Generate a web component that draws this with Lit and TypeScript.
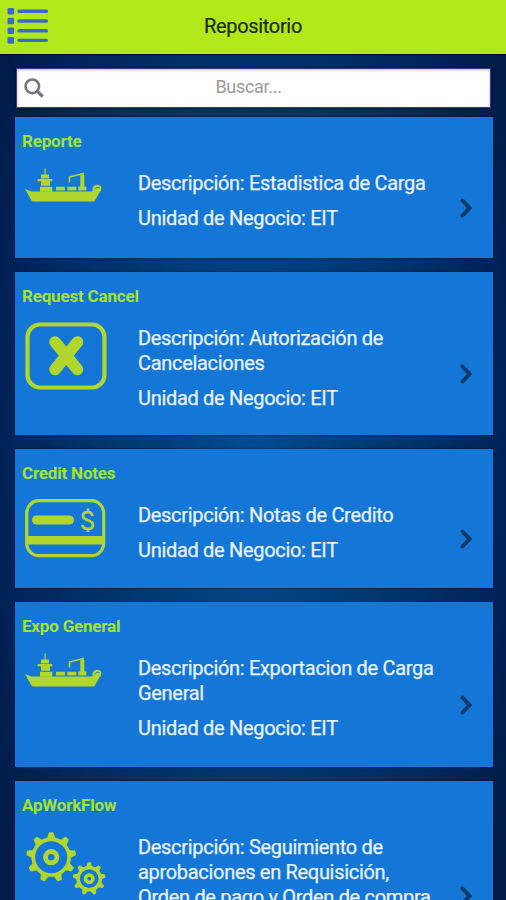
import { LitElement, html, css, svg } from "lit";
import { customElement, property } from "lit/decorators.js";

type IconName = "ship" | "cancel" | "card" | "gears";

interface Report {
  title: string;
  icon: IconName;
  description: string;
  unit: string;
  height: number;
}

const REPORTS: Report[] = [
  { title: "Reporte", icon: "ship", description: "Estadistica de Carga", unit: "EIT", height: 141 },
  { title: "Request Cancel", icon: "cancel", description: "Autorización de Cancelaciones", unit: "EIT", height: 163 },
  { title: "Credit Notes", icon: "card", description: "Notas de Credito", unit: "EIT", height: 139 },
  { title: "Expo General", icon: "ship", description: "Exportacion de Carga General", unit: "EIT", height: 165 },
  {
    title: "ApWorkFlow",
    icon: "gears",
    description: "Seguimiento de aprobaciones en Requisición, Orden de pago y Orden de compra",
    unit: "EIT",
    height: 189,
  },
];

// Toothed ring outline with narrow, slightly tapered teeth.
function gearPath(cx: number, cy: number, outer: number, root: number, teeth: number): string {
  const points: string[] = [];
  const step = (Math.PI * 2) / teeth;
  for (let i = 0; i < teeth; i++) {
    const a = -Math.PI / 2 + i * step;
    for (const [r, o] of [[root, -0.25], [outer, -0.1], [outer, 0.1], [root, 0.25]]) {
      points.push(`${(cx + r * Math.cos(a + o * step)).toFixed(2)} ${(cy + r * Math.sin(a + o * step)).toFixed(2)}`);
    }
  }
  return `M${points.join("L")}Z`;
}

const ICONS = {
  ship: svg`
    <path d="M0 22l6.500 2.500h59.500l4-1 6-1-6 11q-.5 1-2 1H8.500q-1.500 0-2-1z" />
    <path d="M19.500 1.500h1.200v6h3.300v4h-8v-4h3.500zM12.700 12h14.600v2.200h-2.300v4.500h-9v-4.500h-3.300zM15 19.700h12.300v5H15zM31 19.700h9v3.700h-9zM42.300 19.700h9v3.700h-9zM53.300 23.400v-4h2V8h4v11.400h2v4z" />
    <path d="M44.500 15.500V10l13.500-3.500v3" fill="none" stroke="currentColor" stroke-width="1.600" />
    <path d="M67.500 24v-3q1.500-3.200 5-3.200 3 0 3.800 2.700l-.6 4z" />
    <path d="M69.500 22q2.500-2.500 5-1.500" fill="none" stroke="#1477d8" stroke-width=".8" />`,
  cancel: svg`
    <rect x="2.500" y="2.500" width="77" height="63" rx="12.500" fill="none" stroke="currentColor" stroke-width="4.200" />
    <path d="M30 20l22.500 27.500M52.500 20l-22.500 27.500" fill="none" stroke="currentColor" stroke-width="11.500" stroke-linecap="round" />`,
  card: svg`
    <rect x="1.700" y="1.700" width="77" height="55" rx="12.500" fill="none" stroke="currentColor" stroke-width="3.200" />
    <rect x="7" y="16.500" width="42" height="9" rx="4.500" />
    <rect x="1" y="37" width="78" height="8.500" />
    <path d="M67.500 17c-.4-2.400-2-3.800-4.500-3.800-3.200 0-5 1.500-5 3.700 0 5.300 10 3.300 10 9 0 2.500-2 4-5.200 4-3 0-5-1.400-5.300-4M63 9.500v4M63 29v4" fill="none" stroke="currentColor" stroke-width="2.800" />`,
  gears: svg`
    <path fill-rule="evenodd" stroke="currentColor" stroke-width="1.500" stroke-linejoin="round"
      d="${gearPath(26.2, 26.2, 24.2, 19.2, 9)}M43 26.200a16.800 16.800 0 1 0-33.600 0a16.800 16.800 0 1 0 33.600 0z" />
    <circle cx="26.200" cy="26.200" r="5.700" fill="none" stroke="currentColor" stroke-width="4.800" />
    <path fill-rule="evenodd" stroke="currentColor" stroke-width="1.200" stroke-linejoin="round"
      d="${gearPath(64.2, 47.7, 15.8, 12.4, 9)}M74.200 47.700a10 10 0 1 0-20 0a10 10 0 1 0 20 0z" />
    <circle cx="64.200" cy="47.700" r="3.700" fill="none" stroke="currentColor" stroke-width="3.600" />`,
};

@customElement("report-card")
class ReportCard extends LitElement {
  @property({ attribute: false }) report!: Report;

  static styles = css`
    :host {
      display: flex;
      flex-direction: column;
      box-sizing: border-box;
      background: #1477d8;
      box-shadow: 0 0 2px #001040;
      color: #e9f3ff;
    }
    .title {
      height: 42px;
      box-sizing: border-box;
      padding: 13px 7px 0;
      font-size: 17px;
      line-height: 22px;
      font-weight: 700;
      letter-spacing: -0.19px;
      color: #a6e32c;
    }
    .body {
      flex: 1;
      display: grid;
      grid-template-columns: 113px 304px 1fr;
      padding-left: 10px;
    }
    .icon {
      display: block;
      width: 84px;
      height: 70px;
      margin-top: 8px;
      fill: currentColor;
      color: #b1d72f;
    }
    .text {
      padding-top: 12px;
      font-size: 20px;
      line-height: 25px;
      letter-spacing: -0.31px;
      -webkit-text-stroke: 0.25px;
    }
    .text p {
      margin: 0 0 9.500px;
    }
    .chevron {
      align-self: center;
      display: block;
      width: 14px;
      height: 22px;
      margin-left: 17px;
      margin-bottom: 1px;
      fill: none;
      stroke: #0c3a6b;
      stroke-width: 4;
      stroke-linecap: round;
    }
  `;

  render() {
    const r = this.report;
    return html`
      <div class="title">${r.title}</div>
      <div class="body">
        <svg class="icon" viewBox="0 0 84 70">${ICONS[r.icon]}</svg>
        <div class="text">
          <p>Descripción: ${r.description}</p>
          <p>Unidad de Negocio: ${r.unit}</p>
        </div>
        <svg class="chevron" viewBox="0 0 14 22"><path d="M3.500 3.500l7 7.500-7 7.500" /></svg>
      </div>
    `;
  }
}

@customElement("app-root")
class AppRoot extends LitElement {
  static styles = css`
    :host {
      display: flex;
      flex-direction: column;
      height: 900px;
      overflow: hidden;
      font-family: Roboto, "Liberation Sans", sans-serif;
      background: radial-gradient(ellipse 300px 680px at 50% 50%, #004c92 0%, #00386f 45%, #00255a 80%, #001b47 100%);
    }
    .bar {
      flex: none;
      height: 54px;
      box-sizing: border-box;
      padding-bottom: 2px;
      display: grid;
      grid-template-columns: 56px 1fr 56px;
      align-items: center;
      background: #b0e819;
      box-shadow: 0 1px 1px #00083a;
      font-size: 20px;
      letter-spacing: -0.33px;
      color: #1c2a08;
    }
    .menu {
      display: block;
      width: 42px;
      height: 38px;
      margin-left: 7px;
      fill: #3d67cf;
    }
    .heading {
      margin: 0;
      font: inherit;
      text-align: center;
      -webkit-text-stroke: 0.2px;
    }
    .search {
      flex: none;
      height: 40px;
      box-sizing: border-box;
      margin: 13.500px 15px 9.500px 16px;
      display: grid;
      grid-template-columns: 36px 1fr 46px;
      align-items: center;
      background: #fff;
      border: 1px solid #443a80;
      box-shadow: 0 0 2px #00083a, inset 0 1px 3px #bdb4c6;
      font-size: 18px;
      letter-spacing: -0.3px;
      color: #9b9b9b;
    }
    .glass {
      display: block;
      width: 20px;
      height: 20px;
      margin-left: 7px;
      fill: none;
      stroke: #77777b;
    }
    .hint {
      text-align: center;
      padding-bottom: 3px;
    }
    .list {
      flex: none;
      display: flex;
      flex-direction: column;
      gap: 14px;
      margin: 0 13px 0 15px;
    }
  `;

  render() {
    return html`
      <header class="bar">
        <svg class="menu" viewBox="0 0 42 38">
          ${[4.3, 14, 23.7, 33.4].map(
            (y) => svg`<rect x=".5" y=${y - 3.3} width="6.600" height="6.600" rx="1.500" />
              <rect x="10.500" y=${y - 1.7} width="30.500" height="3.400" rx="1.500" />`
          )}
        </svg>
        <h1 class="heading">Repositorio</h1>
      </header>
      <div class="search">
        <svg class="glass" viewBox="0 0 20 20">
          <circle cx="8.300" cy="8.300" r="6.800" stroke-width="2.600" />
          <path d="M13.200 13.200l5.500 5.500" stroke-width="3.200" />
        </svg>
        <span class="hint">Buscar...</span>
      </div>
      <main class="list">
        ${REPORTS.map((r) => html`<report-card .report=${r} style="height:${r.height}px"></report-card>`)}
      </main>
    `;
  }
}
